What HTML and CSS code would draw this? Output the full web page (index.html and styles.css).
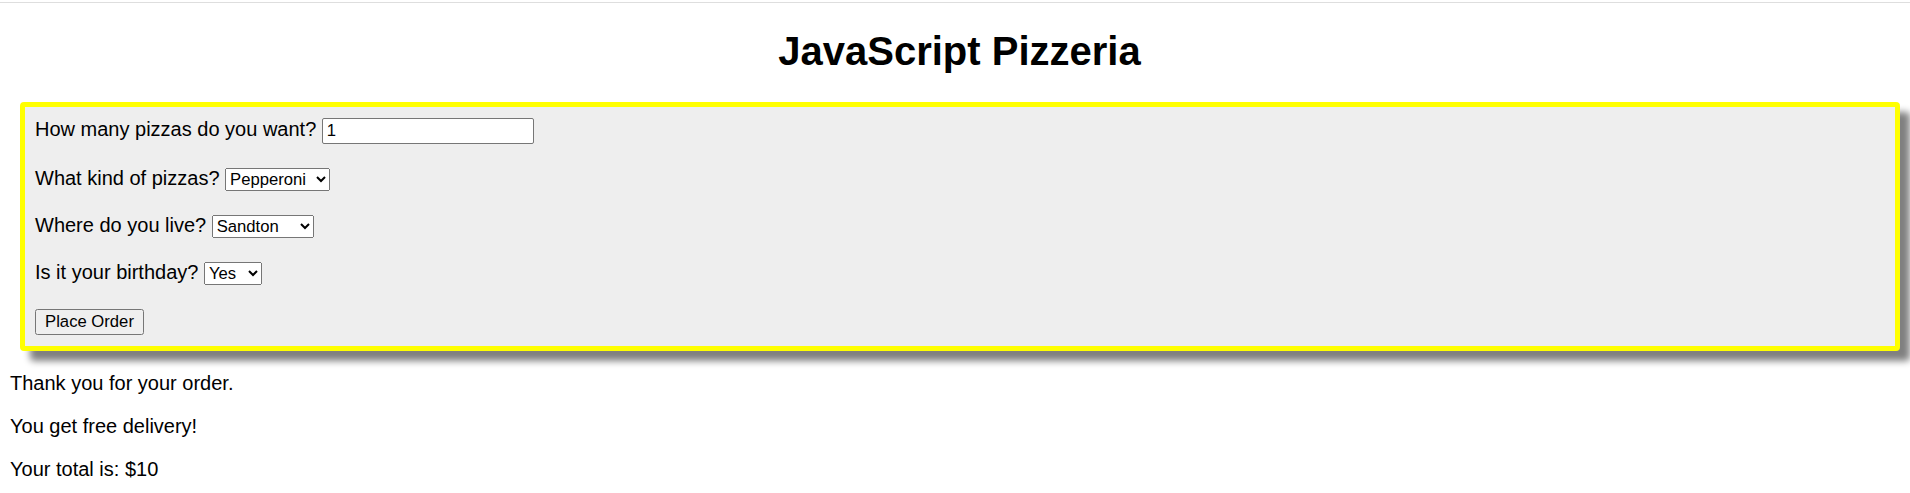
FILE: index.html
```html
<!DOCTYPE html>
<html lang="en">
<head>
<meta charset="utf-8">
<title>JavaScript Pizzeria</title>
<link rel="stylesheet" href="styles.css">
</head>
<body>
<div class="topline"></div>
<main class="page">
  <h1 class="title">JavaScript Pizzeria</h1>
  <form class="order">
    <div class="row">
      <label for="qty" class="lbl">How many pizzas do you want?</label>
      <input id="qty" class="qty" type="text" value="1">
    </div>
    <div class="row">
      <label for="kind" class="lbl">What kind of pizzas?</label>
      <select id="kind" class="sel sel-kind">
        <option>Pepperoni</option>
        <option>Cheese</option>
        <option>Veggie</option>
      </select>
    </div>
    <div class="row">
      <label for="area" class="lbl">Where do you live?</label>
      <select id="area" class="sel sel-area">
        <option>Sandton</option>
        <option>Soweto</option>
        <option>Midrand</option>
      </select>
    </div>
    <div class="row">
      <label for="bday" class="lbl">Is it your birthday?</label>
      <select id="bday" class="sel sel-bday">
        <option>Yes</option>
        <option>No</option>
      </select>
    </div>
    <div class="row">
      <button type="button" class="submit">Place Order</button>
    </div>
  </form>
  <p class="msg">Thank you for your order.</p>
  <p class="msg">You get free delivery!</p>
  <p class="msg">Your total is: $10</p>
</main>
</body>
</html>
```

FILE: styles.css
```css
html, body {
  margin: 0;
  padding: 0;
  background: #ffffff;
}

body {
  font-family: "Liberation Sans", Arial, sans-serif;
  font-size: 20px;
  line-height: 23px;
  color: #000;
}

.topline {
  height: 1px;
  margin-top: 2px;
  background: #dedede;
}

.page {
  padding: 0 10px;
}

.title {
  margin: 25px 0 28px;
  padding-left: 9px;
  font-size: 40px;
  line-height: 46px;
  font-weight: bold;
  text-align: center;
}

.order {
  margin: 0 0 21px 10px;
  padding: 11px 10px 11px;
  background: #eeeeee;
  border: 5px solid #ffff00;
  border-radius: 4px;
  box-shadow: 10px 10px 7px #808080;
  display: flex;
  flex-direction: column;
  align-items: flex-start;
  gap: 24px;
}

.row {
  display: flex;
  align-items: baseline;
  gap: 5.5px;
}

.lbl {
  line-height: 16px;
}

.qty {
  box-sizing: border-box;
  width: 212px;
  height: 26px;
  margin: 0;
  padding: 0 4px;
  border: 1px solid #767676;
  border-radius: 2px;
  background: #fff;
  font-family: "Liberation Sans", Arial, sans-serif;
  font-size: 16.67px;
  color: #000;
}

.sel {
  box-sizing: border-box;
  height: 23px;
  margin: 0;
  font-family: "Liberation Sans", Arial, sans-serif;
  font-size: 16.67px;
  color: #000;
}

.sel-kind { width: 105px; }
.sel-area { width: 102px; }
.sel-bday { width: 58px; }

.submit {
  box-sizing: border-box;
  width: 109px;
  height: 26px;
  margin: 0;
  padding: 0;
  font-family: "Liberation Sans", Arial, sans-serif;
  font-size: 16.67px;
  color: #000;
}

.msg {
  margin: 0 0 20px;
}
```
